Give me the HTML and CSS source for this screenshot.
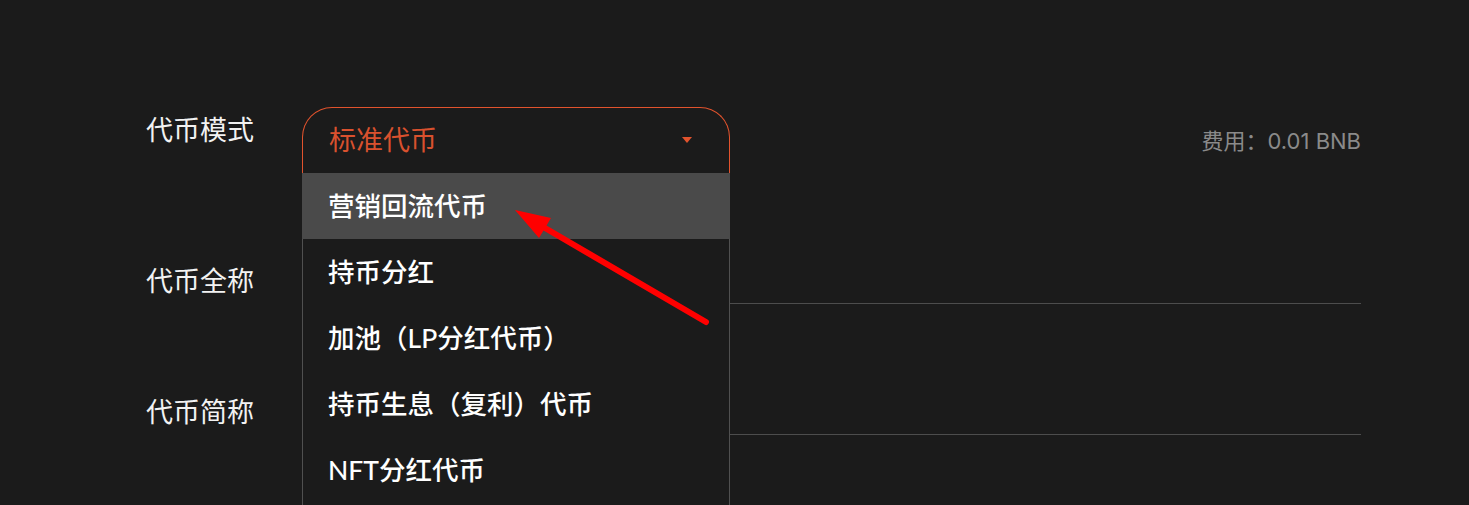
FILE: index.html
```html
<!DOCTYPE html>
<html lang="zh-CN">
<head>
    <meta charset="UTF-8">
    <meta name="viewport" content="width=device-width, initial-scale=1.0">
    <title>创建代币</title>
    <link rel="stylesheet" href="styles.css">
</head>
<body>
    <div class="form">
        <div class="row">
            <div class="label">代币模式</div>
            <div class="field field-mode">
                <div class="select-wrap">
                    <div class="select">
                        <span>标准代币</span>
                        <span class="caret"></span>
                    </div>
                    <ul class="options">
                        <li class="active">营销回流代币</li>
                        <li>持币分红</li>
                        <li>加池（LP分红代币）</li>
                        <li>持币生息（复利）代币</li>
                        <li>NFT分红代币</li>
                    </ul>
                </div>
                <div class="fee">费用：0.01 BNB</div>
            </div>
        </div>
        <div class="row">
            <div class="label">代币全称</div>
            <div class="field">
                <input type="text" class="text-input">
            </div>
        </div>
        <div class="row">
            <div class="label">代币简称</div>
            <div class="field">
                <input type="text" class="text-input">
            </div>
        </div>
    </div>

    <svg class="pointer" width="1469" height="505" viewBox="0 0 1469 505">
        <line x1="706" y1="322" x2="545" y2="228" stroke="#ff0000" stroke-width="6" stroke-linecap="round"/>
        <polygon points="515,210 551,218 539,238" fill="#ff0000"/>
    </svg>
</body>
</html>
```

FILE: styles.css
```css
body {
    margin: 0;
    background-color: #1b1b1b;
    font-family: Lato, "Noto Sans CJK SC", sans-serif;
    color: #f2f2f2;
    position: relative;
    height: 505px;
    overflow: hidden;
}

.form {
    padding: 107px 0 0 146px;
    width: 1215px;
}

.row {
    display: flex;
    align-items: flex-start;
    margin-bottom: 85px;
}

.label {
    width: 156px;
    font-size: 27px;
    line-height: 40px;
    margin-top: 3px;
}

.field {
    flex: 1;
}

.field-mode {
    display: flex;
    align-items: center;
}

.select-wrap {
    position: relative;
    width: 428px;
    z-index: 2;
}

.select {
    box-sizing: border-box;
    height: 66px;
    border: 1px solid #e2532d;
    border-bottom: none;
    border-radius: 30px 30px 0 0;
    padding: 0 37px 4px 26px;
    display: flex;
    align-items: center;
    justify-content: space-between;
    font-size: 27px;
    color: #d9512e;
}

.caret {
    width: 0;
    height: 0;
    margin-top: 2px;
    border-left: 5px solid transparent;
    border-right: 5px solid transparent;
    border-top: 6px solid #e2532d;
}

.options {
    position: absolute;
    top: 100%;
    left: 0;
    width: 100%;
    box-sizing: border-box;
    margin: 0;
    padding: 0 0 20px;
    list-style: none;
    background-color: #1b1b1b;
    border-left: 1px solid #505050;
    border-right: 1px solid #505050;
}

.options li {
    height: 66px;
    line-height: 66px;
    padding-left: 25px;
    font-size: 26.5px;
    font-weight: 500;
    color: #ffffff;
}

.options li.active {
    background-color: #4a4a4a;
    margin: 0 -1px;
    padding-left: 26px;
}

.fee {
    margin-left: auto;
    margin-bottom: 2px;
    font-family: Inter, "Noto Sans CJK SC", sans-serif;
    font-size: 22px;
    color: #8a8a8a;
}

.text-input {
    display: block;
    box-sizing: border-box;
    width: 100%;
    height: 46px;
    background: transparent;
    border: none;
    border-bottom: 1px solid #4d4d4d;
    outline: none;
}

.pointer {
    position: absolute;
    top: 0;
    left: 0;
    pointer-events: none;
    z-index: 3;
}
```
